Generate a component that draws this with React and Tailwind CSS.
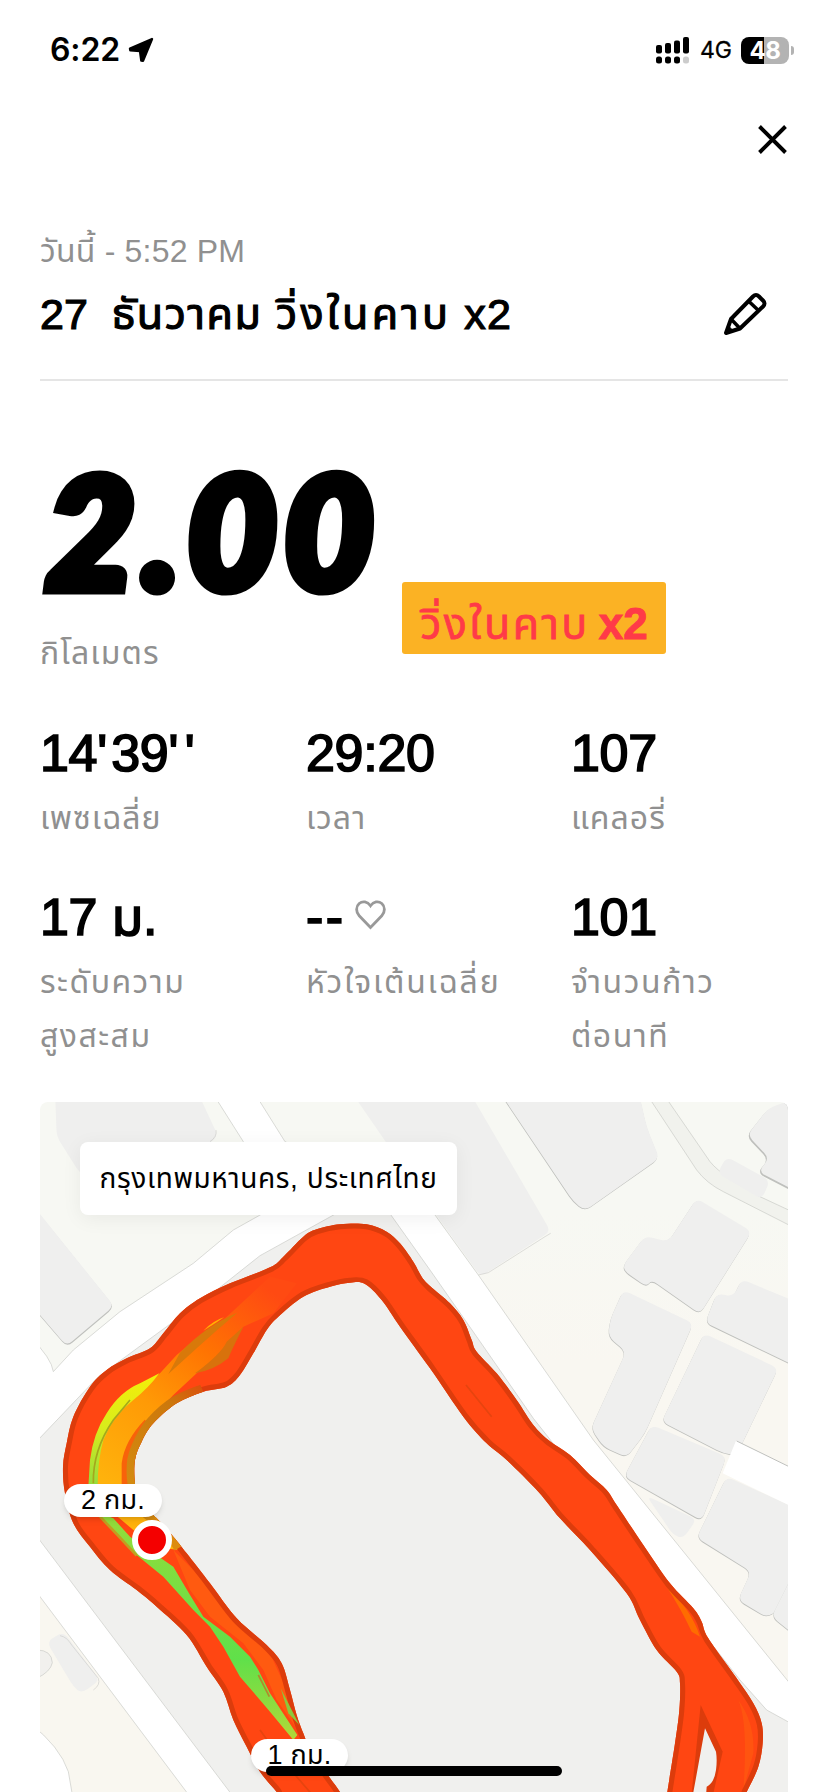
const smooth = (p, closed = true) => {
  const n = p.length;
  const at = (i) => (closed ? p[(i + n) % n] : p[Math.max(0, Math.min(n - 1, i))]);
  let d = `M${p[0][0]} ${p[0][1]}`;
  for (let i = 0; i < (closed ? n : n - 1); i++) {
    const [a, b, c, e] = [at(i - 1), at(i), at(i + 1), at(i + 2)];
    d += `C${b[0] + (c[0] - a[0]) / 6} ${b[1] + (c[1] - a[1]) / 6} ${c[0] - (e[0] - b[0]) / 6} ${c[1] - (e[1] - b[1]) / 6} ${c[0]} ${c[1]}`;
  }
  return closed ? d + 'Z' : d;
};

const rounded = (p, r = 22) => {
  const n = p.length;
  let d = '';
  p.forEach((b, i) => {
    const a = p[(i + n - 1) % n];
    const c = p[(i + 1) % n];
    const toward = (q) => {
      const l = Math.hypot(q[0] - b[0], q[1] - b[1]);
      const k = Math.min(r, l / 2) / l;
      return [b[0] + (q[0] - b[0]) * k, b[1] + (q[1] - b[1]) * k];
    };
    const s = toward(a);
    const e = toward(c);
    d += `${i ? 'L' : 'M'}${s[0]} ${s[1]}Q${b[0]} ${b[1]} ${e[0]} ${e[1]}`;
  });
  return d + 'Z';
};

const buildings = [
  { flat: true, p: [[75, 0], [500, 0], [565, 140], [300, 330], [150, 250], [80, 140]] },
  { shift: 'translate(1 4)', p: [[0, 335], [252, 648], [110, 768], [0, 640]] },
  { flat: true, p: [[960, 0], [1315, 0], [1562, 424], [1352, 560], [1215, 370]] },
  { p: [[1405, 0], [1825, 0], [1850, 110], [1888, 205], [1665, 362], [1630, 335]] },
  { p: [[1780, 525], [1845, 438], [1915, 455], [2000, 325], [2165, 425], [2010, 672], [1865, 570], [1850, 590], [1785, 545]] },
  { p: [[1780, 600], [1990, 700], [1845, 1030], [1790, 1102], [1720, 1070], [1683, 1015], [1788, 785], [1735, 740], [1740, 690]] },
  { p: [[2060, 610], [2110, 620], [2135, 568], [2310, 640], [2310, 835], [2026, 698]] },
  { p: [[2022, 730], [2245, 835], [2120, 1095], [2080, 1090], [1895, 995]] },
  { p: [[1865, 1005], [2090, 1100], [2015, 1292], [1782, 1160]] },
  { p: [[2090, 1160], [2310, 1260], [2310, 1460], [2245, 1560], [2210, 1582], [2124, 1530], [2163, 1445], [2000, 1343]] },
  { p: [[2300, 1430], [2225, 1580], [2300, 1640]] },
  { flat: true, p: [[1850, 1218], [2000, 1288], [1960, 1345], [1930, 1335]] },
  { shift: 'translate(-3 4)', p: [[2310, 20], [2215, 55], [2152, 135], [2218, 205], [2185, 245], [2310, 310]] },
  { flat: true, p: [[2062, 250], [2090, 200], [2220, 272], [2195, 328]] },
  { flat: true, p: [[50, 1655], [100, 1625], [210, 1770], [155, 1810], [130, 1790]] },
];

const outer = [[780, 2160], [740, 2106], [690, 2045], [650, 1970], [610, 1890], [580, 1805], [530, 1730], [470, 1635], [380, 1550], [320, 1500], [240, 1440], [180, 1370], [130, 1300], [105, 1210], [99, 1130], [110, 1060], [130, 980], [180, 890], [230, 840], [290, 805], [360, 775], [400, 730], [450, 670], [510, 625], [600, 580], [720, 532], [760, 500], [820, 440], [860, 418], [930, 403], [1010, 403], [1070, 425], [1110, 460], [1150, 515], [1175, 560], [1200, 588], [1260, 640], [1300, 690], [1325, 750], [1340, 785], [1400, 850], [1460, 930], [1510, 1005], [1555, 1050], [1620, 1095], [1680, 1155], [1730, 1200], [1760, 1245], [1840, 1365], [1920, 1480], [1990, 1555], [2015, 1595], [2035, 1645], [2120, 1765], [2170, 1840], [2195, 1900], [2198, 1960], [2185, 2030], [2150, 2106], [2120, 2160]];
const inner = [[960, 2160], [930, 2106], [890, 2050], [840, 1975], [820, 1930], [800, 1875], [780, 1800], [755, 1720], [710, 1665], [620, 1585], [540, 1480], [470, 1390], [430, 1340], [380, 1285], [330, 1240], [315, 1180], [315, 1110], [335, 1055], [370, 1000], [440, 940], [520, 905], [590, 890], [630, 855], [670, 790], [710, 720], [745, 680], [820, 620], [900, 590], [960, 578], [1005, 582], [1055, 630], [1110, 710], [1200, 835], [1300, 980], [1370, 1060], [1430, 1110], [1525, 1205], [1590, 1285], [1680, 1380], [1790, 1510], [1830, 1590], [1880, 1680], [1940, 1745], [1950, 1780], [1948, 1860], [1935, 1960], [1912, 2106], [1905, 2160]];
const track = `${smooth(outer)}${smooth(inner)}`;

function RouteMap() {
  return (
    <svg className="block h-full w-full" viewBox="30 36 2244 2070" preserveAspectRatio="none">
      <defs>
        <linearGradient id="pace" gradientUnits="userSpaceOnUse" x1="260" y1="1200" x2="720" y2="600">
          <stop offset="0" stopColor="#ffb20c" />
          <stop offset=".35" stopColor="#ff9a06" />
          <stop offset=".65" stopColor="#ff7402" />
          <stop offset="1" stopColor="#ff4a12" />
        </linearGradient>
        <linearGradient id="fast" gradientUnits="userSpaceOnUse" x1="0" y1="1280" x2="0" y2="1940">
          <stop offset="0" stopColor="#94dc3a" />
          <stop offset=".65" stopColor="#60e04a" />
          <stop offset="1" stopColor="#b0d838" />
        </linearGradient>
        <linearGradient id="lime" gradientUnits="userSpaceOnUse" x1="0" y1="850" x2="0" y2="1180">
          <stop offset="0" stopColor="#f4ee08" />
          <stop offset=".5" stopColor="#d8ec1c" />
          <stop offset="1" stopColor="#98dc3c" />
        </linearGradient>
        <linearGradient id="edge" gradientUnits="userSpaceOnUse" x1="300" y1="1180" x2="540" y2="890">
          <stop offset="0" stopColor="#d48a10" />
          <stop offset=".7" stopColor="#cc780c" />
          <stop offset="1" stopColor="#dc4c0c" />
        </linearGradient>
        <linearGradient id="land" x1="0" y1="0" x2="0" y2="1">
          <stop offset=".2" stopColor="#f7f8f3" />
          <stop offset=".45" stopColor="#f9f7f1" />
        </linearGradient>
        <clipPath id="trackClip"><path d={track} clipRule="evenodd" /></clipPath>
      </defs>
      <rect x="0" y="0" width="2310" height="2160" fill="#fff" />
      <g stroke="#c9cac6" strokeWidth="2">
        <path d="M0 0H542L640 155L750 340L685 378L610 420L490 520L270 665L130 780L70 845Q65 805 0 740Z" fill="#f7f8f3" />
        <path d="M668 0L765 155L900 220L1110 240L1215 375L1345 555L1690 1050L2310 1818V0Z" fill="url(#land)" />
        <path d="M0 1075L205 860L560 600L690 497L905 378L1000 325L1050 325L1085 378L1200 540L1340 740L1510 985L2130 1770L2210 1860L2310 1915V2160H640L0 1312Z" fill="#f0f0ee" />
        <path d="M0 1480L510 2160H0Z" fill="#f9f7f0" />
        <path d="M0 1900Q90 1970 115 2045L135 2160H0Z" fill="#fff" />
        <path d="M1842 0L2000 240Q2030 280 2080 305L2310 422V376L2190 320L2100 265Q2060 240 2040 215L1892 0Z" fill="#f1f2ed" />
        <path d="M20 1680Q65 1680 67 1718Q62 1745 20 1765" fill="#f1f0ed" />
      </g>
      {buildings.map(({ p, flat, shift }, i) => (
        <g key={i}>
          {!flat && <path d={rounded(p)} fill="#bfc0bd" transform={shift || 'translate(-1 2.5)'} />}
          <path d={rounded(p)} fill="#efefee" />
        </g>
      ))}
      <path d="M1562 430L1545 440L1375 548L1345 555M558 120Q562 140 540 155M90 1637Q110 1640 125 1665L205 1765Q212 1785 190 1800" fill="none" stroke="#cfcfcc" strokeWidth="2" />
      <path d="M2118 1052L2310 1145V1262L2078 1150Z" fill="#fff" />
      <path d="M2120 1053L2310 1146" fill="none" stroke="#bfc0bd" strokeWidth="3" />

      <path d={track} fill="#ff4612" fillRule="evenodd" />
      <g clipPath="url(#trackClip)">
        <path d="M430 1380L520 1470L640 1600L720 1690L770 1800L810 1930L740 1830L700 1740L640 1660L540 1580L480 1500Z" fill="#ff5a10" />
        <path d="M200 1190L202 1090L235 1000L300 925L390 850L440 795L500 745L580 690L720 560L800 580L730 670L640 710L600 770L500 850L430 915L350 1000L300 1060L282 1180L300 1240L400 1300L450 1380L400 1375L310 1320L215 1240Z" fill="url(#pace)" />
        <path d="M415 852L450 788Q530 705 622 668Q560 720 500 775Z" fill="#d8790a" />
        <path d="M495 850Q575 790 590 755L640 710Q600 790 595 805Q550 842 495 850Z" fill="#d8720c" />
        <path d="M520 722Q550 692 582 682Q545 708 520 722Z" fill="#ffb400" />
        <path d="M283 1190V1120Q292 1055 350 995" fill="none" stroke="#f8620a" strokeWidth="16" />
        <path d="M175 1190L180 1110Q190 1030 230 970Q270 905 330 880L388 850Q355 895 310 930Q250 975 220 1050Q203 1110 203 1190Z" fill="url(#lime)" />
        <path d="M190 1180Q188 1080 250 990L300 930" fill="none" stroke="#a4a81c" strokeWidth="5" />
        <path d="M200 1265L250 1285L300 1340L430 1430L480 1515L520 1580L600 1640L660 1700L685 1740L720 1810L802 1935L790 1950L720 1865L630 1760L580 1670L540 1610L490 1560L400 1460L320 1395L260 1330Z" fill="url(#fast)" />
        <path d="M210 1280L260 1332L320 1397" fill="none" stroke="#c0a020" strokeWidth="8" />
        <path d="M690 1920L740 1990L860 2130M1308 885L1385 980" fill="none" stroke="#e6440f" strokeWidth="5" />
        <path d="M685 1755L718 1820" fill="none" stroke="#b08a2c" strokeWidth="5" />
        <path d="M1910 1490Q1985 1560 2010 1640L1985 1625Q1955 1560 1910 1490Z" fill="#ff6c00" />
        <path d="M2125 1830Q2175 1900 2170 1990L2140 2100Q2155 1900 2125 1830Z" fill="#ff5410" />
        <path d={smooth(outer)} fill="none" stroke="#dc3c0c" strokeWidth="30" />
        <path d={smooth(inner)} fill="none" stroke="#dc3c0c" strokeWidth="30" />
        <path d={smooth([[380, 1285], [330, 1240], [315, 1180], [315, 1110], [335, 1055], [370, 1000], [440, 940], [520, 905]], false)} fill="none" stroke="url(#edge)" strokeWidth="46" />
        <path d="M380 1270L445 1375" fill="none" stroke="#dc8c10" strokeWidth="26" />
        <path d="M752 1795L808 1905L775 1870Z" fill="#8cc83c" />
        <path d="M2012 1845L1985 2110H2050L2078 1985Z" fill="#dc3c0c" />
      </g>
      <path d="M2025 1915L2058 1985Q2062 2010 2058 2040Q2052 2080 2030 2090L2025 2160H1980L1995 2080Z" fill="#f0f0ee" />
    </svg>
  );
}

const sans = "font-['Liberation_Sans','Noto_Sans_Thai',sans-serif]";

function Stat({ value, label, icon, tracking = 'tracking-[1px]' }) {
  return (
    <div className="flex flex-col">
      <div className="flex h-[60px] items-center gap-[9px] text-[52px] leading-[60px] font-normal tracking-[-.3px] text-black [-webkit-text-stroke:1.7px_black]">
        <span className="whitespace-nowrap">{value}</span>
        {icon}
      </div>
      <div className={`mt-2 text-[32px] leading-[54px] text-[#909090] ${tracking}`}>
        {label.map((l) => (
          <div key={l} className="whitespace-nowrap">{l}</div>
        ))}
      </div>
    </div>
  );
}

function Heart() {
  return (
    <svg className="-mt-[5px] h-[30px] w-[31px]" viewBox="0 0 31 30" fill="none" stroke="#999" strokeWidth="2.8">
      <path d="M15.5 27.5L4.2 15.7C.6 11.8 1 6.300 4.200 3.500C7.700.600 12.300 1.400 15.500 5.800C18.700 1.400 23.300.600 26.800 3.500C30 6.300 30.400 11.800 26.800 15.700Z" />
    </svg>
  );
}

function StatusBar() {
  return (
    <header className="flex h-[100px] items-center justify-between pr-[34px] pl-[50px] font-['Inter',sans-serif]">
      <div className="flex items-center gap-[8px]">
        <span className="text-[32px] leading-[40px] font-semibold tracking-[-.1px]">6:22</span>
        <svg className="h-[26px] w-[26px]" viewBox="0 0 26 26" stroke="#000" strokeWidth="2.400" strokeLinejoin="round">
          <path d="M24 2L2 11.600L2.300 13.400L12 14L13.300 23.500L15 23.800Z" />
        </svg>
      </div>
      <div className="flex items-center">
        <svg className="h-[27px] w-[34px]" viewBox="0 0 34 27">
          <rect x="0" y="8" width="6" height="8.500" rx="2" />
          <rect x="9" y="6" width="6" height="10.500" rx="2" />
          <rect x="18" y="3.500" width="6" height="13" rx="2" />
          <rect x="27" y="0" width="6" height="16.500" rx="2" />
          <rect x="0" y="19.500" width="6" height="7" rx="2.500" />
          <rect x="9" y="19.500" width="6" height="7" rx="2.500" />
          <rect x="18" y="19.500" width="6" height="7" rx="2.500" />
          <rect x="27" y="19.500" width="6" height="7" rx="2.500" fill="#ccc" />
        </svg>
        <span className="ml-[10px] text-[23px] leading-[28px] [-webkit-text-stroke:.3px_black]">4G</span>
        <div className="ml-[9px] flex h-[27px] w-[48px] items-center justify-center rounded-[8px] bg-linear-to-r from-black from-48% to-[#b3b3b3] to-48% text-[24px] leading-[27px] font-bold tracking-[-.5px] text-white">
          48
        </div>
        <div className="ml-[2px] h-[9px] w-[3px] rounded-r-full bg-[#b3b3b3]" />
      </div>
    </header>
  );
}

export default function App() {
  return (
    <main className={`flex h-[1792px] w-[828px] flex-col overflow-hidden bg-white text-black ${sans}`}>
      <StatusBar />
      <div className="flex h-[78px] items-center justify-end pr-[41px]">
        <svg className="h-[29px] w-[29px]" viewBox="0 0 29 29" stroke="#000" strokeWidth="3.900">
          <path d="M1.500 1.500L27.500 27.500M27.500 1.500L1.500 27.500" />
        </svg>
      </div>

      <section className="mx-10 mt-[49px] flex h-[154px] flex-col border-b-2 border-[#e5e5e5]">
        <p className="text-[32px] leading-[48px] tracking-[.2px] whitespace-nowrap text-[#909090]">วันนี้ - 5:52 PM</p>
        <div className="mt-[9px] flex h-[60px] items-center justify-between pr-[21px]">
          <h1 className="text-[43px] leading-[60px] whitespace-pre [-webkit-text-stroke:1.2px_black]">
            <span>27  </span>
            <span className="tracking-[1.6px]">ธันวาคม </span>
            <span className="tracking-[3.2px]">วิ่งในคาบ</span>
            <span className="tracking-[1.3px]"> x2</span>
          </h1>
          <svg className="h-[44px] w-[44px]" viewBox="0 0 44 44" fill="none" stroke="#000" strokeWidth="4" strokeLinejoin="round">
            <path d="M3 41L8 27L30 4.500C32 2.500 34 2.500 36 4.500L40 8.500C42 10.500 42 12.500 40 14.500L17 36.500Z" />
            <path d="M26 9.500L35.500 18.500M8 27L17 36.500" strokeWidth="3.500" />
            <path d="M3 41L5.500 34L10 38.500Z" fill="#000" strokeWidth="1" />
          </svg>
        </div>
      </section>

      <section className="mx-10 mt-[71px] flex h-[225px] items-start">
        <div className="w-[362px]">
          <div className="h-[150px] pl-[6px] text-[154px] leading-[155px] font-black tracking-[7.5px] whitespace-nowrap italic font-['Lato',sans-serif] [-webkit-text-stroke:11px_black]">2.00</div>
          <div className="mt-[27px] text-[32px] leading-[48px] tracking-[1.1px] whitespace-nowrap text-[#909090]">กิโลเมตร</div>
        </div>
        <div className="mt-[130px] flex h-[72px] w-[264px] items-center justify-center rounded-[3px] bg-[#fbb224] pt-[11px] text-[43px] leading-[50px] whitespace-pre text-[#ff3a48]">
          <span className="tracking-[2.4px] [-webkit-text-stroke:.8px_#ff3a48]">วิ่งในคาบ</span>
          <span className="ml-[9px] text-[44px] font-bold [-webkit-text-stroke:1px_#ff3a48]">x2</span>
        </div>
      </section>

      <section className="mx-10 mt-[46px] grid grid-cols-[266px_265px_1fr] gap-y-[42px]">
        <Stat
          value={<>14<span className="tracking-[4px]">'</span>39<span className="tracking-[6.5px]">''</span></>}
          label={['เพซเฉลี่ย']}
        />
        <Stat value="29:20" label={['เวลา']} />
        <Stat value="107" label={['แคลอรี่']} />
        <Stat value="17 ม." label={['ระดับความ', 'สูงสะสม']} tracking="tracking-[1.5px]" />
        <Stat value={<span className="tracking-[2.5px]">--</span>} label={['หัวใจเต้นเฉลี่ย']} icon={<Heart />} tracking="tracking-[1.8px]" />
        <Stat value="101" label={['จำนวนก้าว', 'ต่อนาที']} tracking="tracking-[1.5px]" />
      </section>

      <section className="relative mx-10 mt-[39px] h-[690px] overflow-hidden rounded-t-[8px]">
        <RouteMap />
        <div className="absolute top-10 left-10 flex h-[73px] w-[377px] items-center justify-center rounded-[8px] bg-white text-[28px] tracking-[.6px] whitespace-nowrap shadow-[0_4px_20px_rgba(0,0,0,0.06)]">
          กรุงเทพมหานคร, ประเทศไทย
        </div>
        <div className="absolute top-[382px] left-[24px] flex h-[33px] w-[98px] items-center justify-center rounded-full bg-white text-[27px] leading-[37px] tracking-[.2px] whitespace-nowrap shadow-md">2 กม.</div>
        <div className="absolute top-[418px] left-[92px] h-10 w-10 rounded-full border-[6px] border-white bg-[#f40000]" />
        <div className="absolute top-[637px] left-[211px] flex h-[33px] w-[97px] items-center justify-center rounded-full bg-white text-[27px] leading-[37px] tracking-[.2px] whitespace-nowrap shadow-md">1 กม.</div>
        <div className="absolute top-[664px] left-[226px] h-[10px] w-[296px] rounded-full bg-black" />
      </section>
    </main>
  );
}
